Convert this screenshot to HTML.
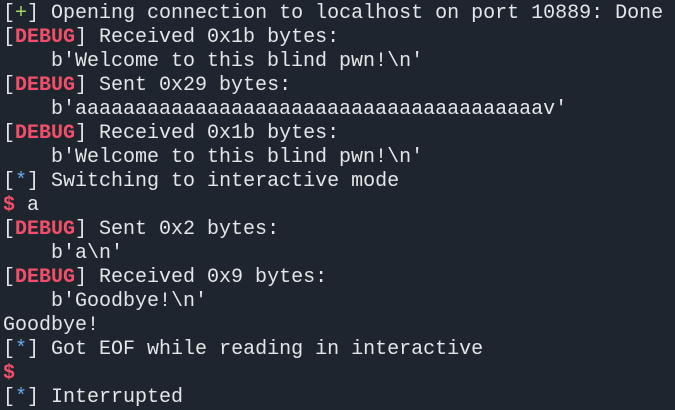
<!DOCTYPE html>
<html><head><style>
html,body{margin:0;padding:0;background:#1e252e;width:675px;height:410px;overflow:hidden}
pre{margin:0;padding:0 0 0 3px;font-family:"Liberation Mono","DejaVu Sans Mono",monospace;font-size:20px;line-height:24px;color:#e4e6e8;position:relative;top:2px;white-space:pre}
.r{color:#f2506a;font-weight:bold}.g{color:#a6d96a}.b{color:#6aaaf2}
</style></head><body><pre>[<span class="g">+</span>] Opening connection to localhost on port 10889: Done
[<span class="r">DEBUG</span>] Received 0x1b bytes:
    b'Welcome to this blind pwn!\n'
[<span class="r">DEBUG</span>] Sent 0x29 bytes:
    b'aaaaaaaaaaaaaaaaaaaaaaaaaaaaaaaaaaaaaaav'
[<span class="r">DEBUG</span>] Received 0x1b bytes:
    b'Welcome to this blind pwn!\n'
[<span class="b">*</span>] Switching to interactive mode
<span class="r">$</span> a
[<span class="r">DEBUG</span>] Sent 0x2 bytes:
    b'a\n'
[<span class="r">DEBUG</span>] Received 0x9 bytes:
    b'Goodbye!\n'
Goodbye!
[<span class="b">*</span>] Got EOF while reading in interactive
<span class="r">$</span>
[<span class="b">*</span>] Interrupted</pre></body></html>
